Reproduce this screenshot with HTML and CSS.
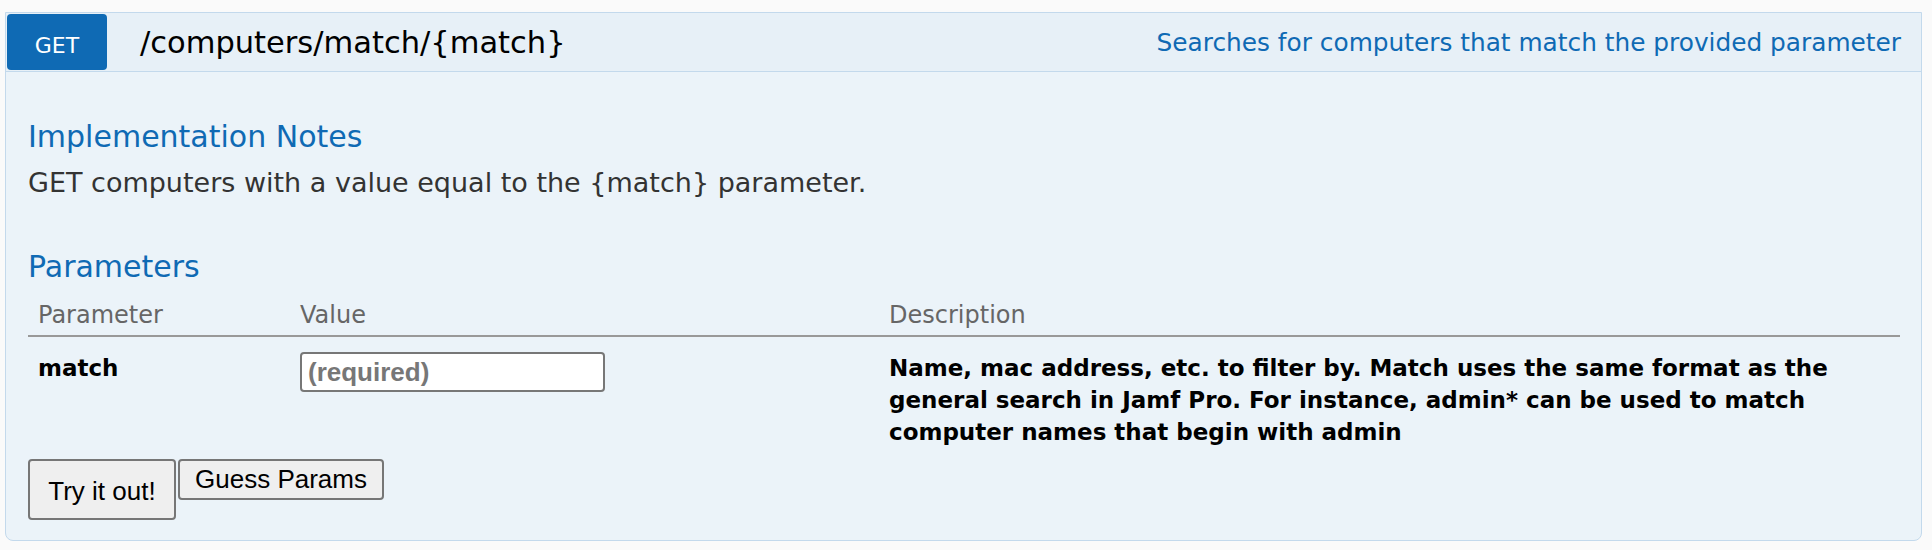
FILE: index.html
```html
<!DOCTYPE html>
<html>
<head>
<meta charset="utf-8">
<link rel="stylesheet" href="styles.css">
</head>
<body>
<div class="op">
  <div class="op-head">
    <span class="verb">GET</span>
    <span class="path">/computers/match/{match}</span>
    <span class="summary">Searches for computers that match the provided parameter</span>
  </div>
  <div class="op-body">
    <h4 class="section-title">Implementation Notes</h4>
    <p class="notes">GET computers with a value equal to the {match} parameter.</p>
    <h4 class="section-title params-title">Parameters</h4>
    <table class="params">
      <thead>
        <tr>
          <th class="col-name">Parameter</th>
          <th class="col-value">Value</th>
          <th class="col-desc">Description</th>
        </tr>
      </thead>
      <tbody>
        <tr>
          <td class="cell-name">match</td>
          <td class="cell-value"><input class="req-input" type="text" placeholder="(required)"></td>
          <td class="cell-desc">Name, mac address, etc. to filter by. Match uses the same format as the general search in Jamf Pro. For instance, admin* can be used to match computer names that begin with admin</td>
        </tr>
      </tbody>
    </table>
    <div class="actions">
      <button class="btn btn-try">Try it out!</button>
      <button class="btn btn-guess">Guess Params</button>
    </div>
  </div>
</div>
</body>
</html>
```

FILE: styles.css
```css
html, body {
  margin: 0;
  padding: 0;
  background: #fafafa;
}
body {
  padding: 12px 10px 10px 5px;
  font-family: "DejaVu Sans", sans-serif;
}
.op {
  background: #ebf3f9;
  border: 1px solid #c3d9ec;
  border-radius: 0 0 8px 8px;
}
.op-head {
  display: flex;
  align-items: center;
  height: 58px;
  border-bottom: 1px solid #c3d9ec;
  background: #e7f0f7;
}
.verb {
  box-sizing: border-box;
  width: 100px;
  height: 56px;
  margin: 1px 0 1px 1px;
  background: #0f6ab4;
  color: #fff;
  border-radius: 4px;
  font-size: 22px;
  display: flex;
  align-items: center;
  justify-content: center;
  padding-top: 6px;
}
.path {
  margin-left: 33px;
  font-size: 30.5px;
  color: #000;
  flex: 1;
}
.summary {
  font-size: 24.8px;
  color: #0f6ab4;
  margin-right: 20px;
}
.op-body {
  padding: 47px 21px 20px 22px;
}
.section-title {
  margin: 0;
  font-size: 30px;
  font-weight: normal;
  color: #0f6ab4;
  line-height: 36px;
}
.notes {
  margin: 11px 0 0;
  font-size: 27px;
  line-height: 34px;
  color: #333;
}
.params-title {
  margin-top: 49px;
}
.params {
  width: 100%;
  border-collapse: collapse;
  margin-top: 4px;
}
.params th {
  text-align: left;
  font-weight: normal;
  font-size: 24px;
  color: #666;
  padding: 12px 10px 6px;
  border-bottom: 2px solid #999;
}
.col-name { width: 242px; }
.col-value { width: 569px; }
.params td {
  vertical-align: top;
  padding: 15px 10px 0;
  font-size: 23px;
  line-height: 32px;
  font-weight: bold;
  color: #000;
}
.params td.cell-value {
  padding-top: 15px;
}
.req-input {
  box-sizing: border-box;
  width: 305px;
  height: 40px;
  border: 2px solid #777;
  border-radius: 4px;
  background: #fff;
  padding: 0 6px;
  font-family: "Liberation Sans", Arial, sans-serif;
  font-size: 26px;
  font-weight: bold;
}
.req-input::placeholder {
  color: #777;
}
.actions {
  display: flex;
  align-items: flex-start;
  gap: 2px;
  margin-top: 11px;
}
.btn {
  box-sizing: border-box;
  font-family: "Liberation Sans", Arial, sans-serif;
  font-size: 26px;
  color: #000;
  background: #efefef;
  border: 2px solid #767676;
  border-radius: 4px;
  padding: 0;
}
.btn-try {
  width: 148px;
  height: 61px;
  padding-top: 4px;
}
.btn-guess {
  width: 206px;
  height: 41px;
}
```
